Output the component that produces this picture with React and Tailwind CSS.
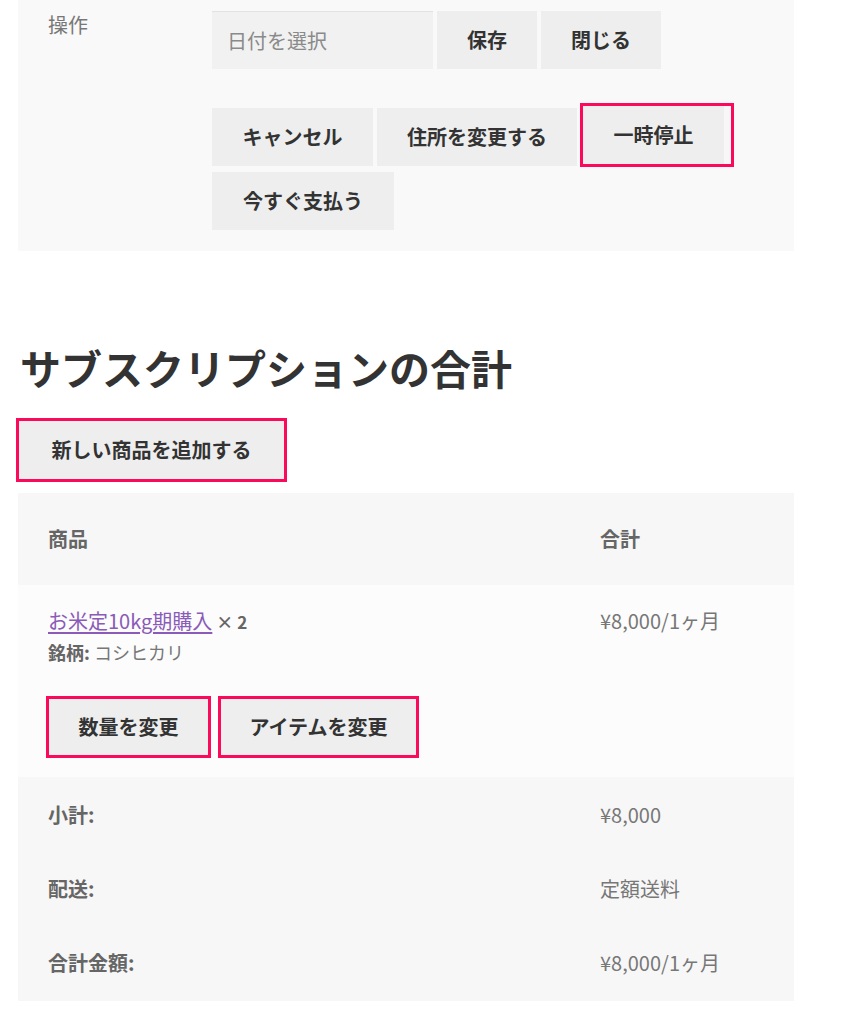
export default function App() {
    const btn = "h-[58px] px-[30px] bg-[#eeeeee] text-[#333] font-bold text-[20px] flex items-center justify-center whitespace-nowrap";
    const pink = "border-[3px] border-[#fb0a5b]";

    return (
        <div className="min-h-[1024px] bg-white font-['Noto_Sans_CJK_JP',sans-serif] text-[#333]">
            {/* 操作 panel */}
            <div className="ml-[18px] w-[776px] h-[251px] bg-[#f9f9f9] flex">
                <div className="w-[194px] pl-[30px] pt-[10px] text-[20px] leading-[30px] text-[#777]">操作</div>
                <div className="pt-[11px] flex flex-col">
                    <div className="flex gap-[4px]">
                        <div className="w-[221px] h-[58px] bg-[#f1f1f1] border-t border-[#e2e2e2] pl-[15px] flex items-center text-[20px] text-[#8a8a8a]">
                            日付を選択
                        </div>
                        <button className={btn + " w-[100px]"}>保存</button>
                        <button className={btn + " w-[120px]"}>閉じる</button>
                    </div>
                    <div className="mt-[34px] flex items-end gap-[4px]">
                        <button className={btn + " w-[161px] mb-[1px]"}>キャンセル</button>
                        <button className={btn + " w-[200px] mb-[1px]"}>住所を変更する</button>
                        <div className={pink + " w-[154px] h-[64px] bg-[#f7f7f7] -ml-[1px]"}>
                            <button className={btn + " w-[141px] h-[58px]"}>一時停止</button>
                        </div>
                    </div>
                    <div className="mt-[5px] flex">
                        <button className={btn + " w-[182px] h-[57px]"}>今すぐ支払う</button>
                    </div>
                </div>
            </div>

            {/* heading */}
            <h2 className="mt-[88px] ml-[20px] text-[41px] leading-[56px] font-bold text-[#333]">サブスクリプションの合計</h2>

            <div className="mt-[23px] ml-[16px] w-[271px]">
                <div className={pink + " h-[64px]"}>
                    <button className={btn + " w-full h-full"}>新しい商品を追加する</button>
                </div>
            </div>

            {/* table */}
            <div className="mt-[11px] ml-[18px] w-[776px]">
                <div className="h-[92px] bg-[#f7f7f7] flex items-center text-[20px] font-bold text-[#666]">
                    <div className="w-[552px] pl-[30px]">商品</div>
                    <div className="pl-[30px]">合計</div>
                </div>
                <div className="h-[192px] bg-[#fcfcfc] flex">
                    <div className="w-[552px] pl-[28px] pt-[21px]">
                        <div className="pl-[2px] text-[20px] leading-[30px]">
                            <a href="#" className="text-[#8a5bb8] underline underline-offset-[3px]">お米定10kg期購入</a>
                            <span className="ml-[4px] font-bold text-[17px] text-[#666]">× 2</span>
                        </div>
                        <div className="pl-[2px] text-[18px] leading-[30px] text-[#777]">
                            <span className="font-bold text-[#666]">銘柄:</span> コシヒカリ
                        </div>
                        <div className="mt-[29px] flex gap-[7px]">
                            <div className={pink + " w-[165px] h-[62px]"}>
                                <button className={btn + " w-full h-full"}>数量を変更</button>
                            </div>
                            <div className={pink + " w-[201px] h-[62px]"}>
                                <button className={btn + " w-full h-full"}>アイテムを変更</button>
                            </div>
                        </div>
                    </div>
                    <div className="pl-[30px] pt-[21px] text-[20px] leading-[30px] text-[#777]">¥8,000/1ヶ月</div>
                </div>
                <div className="bg-[#f7f7f7] py-[1px]">
                    {[
                        ["小計:", "¥8,000"],
                        ["配送:", "定額送料"],
                        ["合計金額:", "¥8,000/1ヶ月"],
                    ].map(([k, v]) => (
                        <div key={k} className="h-[74px] flex items-center text-[20px]">
                            <div className="w-[552px] pl-[30px] font-bold text-[#666]">{k}</div>
                            <div className="pl-[30px] text-[#777]">{v}</div>
                        </div>
                    ))}
                </div>
            </div>
        </div>
    );
}
